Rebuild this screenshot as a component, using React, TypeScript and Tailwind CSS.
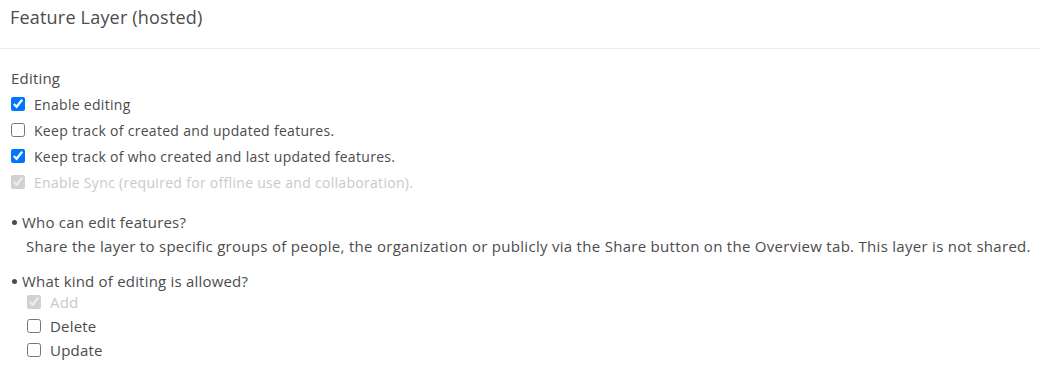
const Check = ({
    label,
    checked = false,
    disabled = false,
    className = "",
}: {
    label: string;
    checked?: boolean;
    disabled?: boolean;
    className?: string;
}) => (
    <label className={`flex items-center gap-[9px] h-6 ${disabled ? "text-[#cacaca]" : "text-[#4c4c4c]"} ${className}`}>
        <input
            type="checkbox"
            className="m-0 size-[14px]"
            defaultChecked={checked}
            disabled={disabled}
        />
        <span>{label}</span>
    </label>
);

const Bullet = ({ children }: { children: React.ReactNode }) => (
    <div className="flex items-center leading-6">
        <span className="ml-[1px] mr-[5px] size-[5px] rounded-full bg-[#4c4c4c]" />
        {children}
    </div>
);

const App = () => (
    <div className="w-[1040px] h-[369px] bg-white text-[#4c4c4c] font-['Open_Sans',sans-serif] text-[15px] tracking-[0.2px]">
        <div className="h-[49px] pl-[10px] pt-[5px] border-b border-[#eaeaea]">
            <h1 className="text-[18px] leading-6">Feature Layer (hosted)</h1>
        </div>
        <div className="pl-[11px] pt-[17px]">
            <div className="text-[15px] leading-6 mb-[2px]">Editing</div>
            <div className="flex flex-col gap-[2px] text-[14px] tracking-[0.3px]">
                <Check label="Enable editing" checked />
                <Check label="Keep track of created and updated features." />
                <Check label="Keep track of who created and last updated features." checked />
                <Check label="Enable Sync (required for offline use and collaboration)." checked disabled />
            </div>
            <div className="mt-[16px]">
                <Bullet>Who can edit features?</Bullet>
                <div className="pl-[15px] leading-6 tracking-[0.29px]">
                    Share the layer to specific groups of people, the organization or publicly via the Share button on the Overview tab. This layer is not shared.
                </div>
            </div>
            <div className="mt-[11px]">
                <Bullet>What kind of editing is allowed?</Bullet>
                <div className="pl-[16px] -mt-[3px] flex flex-col">
                    <Check label="Add" checked disabled />
                    <Check label="Delete" />
                    <Check label="Update" />
                </div>
            </div>
        </div>
    </div>
);

export default App;
